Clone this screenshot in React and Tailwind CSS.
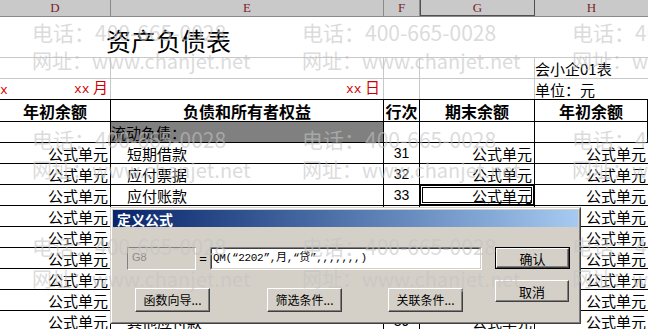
const rows = [
  ['短期借款', '31'],
  ['应付票据', '32'],
  ['应付账款', '33', true],
  ['预收账款', '34'],
  ['应付职工薪酬', '35'],
  ['应交税费', '36'],
  ['应付利息', '37'],
  ['应付利润', '38'],
  ['其他应付款', '39'],
];

const markCols = [32, 302, 572];
const phoneTops = [22, 129, 236];
const webTops = [51, 160, 269];

const Watermark = () => (
  <div className="pointer-events-none absolute inset-0 z-20 text-[rgba(195,195,195,0.6)] font-['Noto_Sans_CJK_SC',sans-serif]">
    {phoneTops.map((t) =>
      markCols.map((l) => (
        <div
          key={`p${t}-${l}`}
          className="absolute whitespace-nowrap text-[21px] leading-[21px]"
          style={{ top: t, left: l }}
        >
          电话：400-665-0028
        </div>
      ))
    )}
    {webTops.map((t) =>
      markCols.map((l) => (
        <div
          key={`w${t}-${l}`}
          className="absolute whitespace-nowrap text-[20px] leading-[20px]"
          style={{ top: t, left: l }}
        >
          网址：www.chanjet.net
        </div>
      ))
    )}
  </div>
);

const WinButton = ({ children, width, isDefault, className = '' }) => (
  <div
    className={`${width} ${
      isDefault ? 'border border-black' : ''
    } ${className}`}
  >
    <div className="h-full border border-t-white border-l-white border-r-[#404040] border-b-[#404040] shadow-[inset_-1px_-1px_0_#808080] bg-[#d4d0c8] flex items-center justify-center text-[12px] leading-none">
      {children}
    </div>
  </div>
);

const Dialog = () => (
  <div className="absolute left-[110px] top-[207px] z-10 w-[471px] h-[117px] border border-t-[#d4d0c8] border-l-[#d4d0c8] border-r-[#404040] border-b-[#404040] bg-[#d4d0c8]">
    <div className="h-full border border-t-white border-l-white border-r-[#808080] border-b-[#808080] p-[1px]">
      <div className="h-[17px] bg-linear-to-r from-[#0a246a] to-[#a6caf0] flex items-center pl-[4px] text-white font-bold text-[14px] leading-none">
        定义公式
      </div>
      <div className="flex pl-[14px] pt-[20px]">
        <div className="w-[355px]">
          <div className="flex h-[23px]">
            <div className="w-[69px] border border-t-[#808080] border-l-[#808080] border-r-white border-b-white bg-[#d4d0c8] pl-[4px] pt-[2px] text-[11px] leading-[14px] text-[#8a8a8a] font-['Liberation_Sans',sans-serif]">
              G8
            </div>
            <div className="w-[14px] flex items-center justify-center text-[13px] font-['Liberation_Sans',sans-serif]">
              =
            </div>
            <div className="w-[272px] border border-t-[#808080] border-l-[#808080] border-r-white border-b-white">
              <div className="h-full border border-t-[#404040] border-l-[#404040] border-r-[#d4d0c8] border-b-[#d4d0c8] bg-white flex items-center pl-[1px] text-[11px] font-['Liberation_Mono','Noto_Sans_CJK_SC',monospace] tracking-[-0.3px]">
                QM(“2202”,月,“贷”,,,,,,,)
              </div>
            </div>
          </div>
          <div className="flex mt-[18px] h-[24px]">
            <WinButton width="w-[75px]" className="ml-[8px]">函数向导...</WinButton>
            <WinButton width="w-[75px]" className="ml-[57px]">筛选条件...</WinButton>
            <WinButton width="w-[75px]" className="ml-[46px]">关联条件...</WinButton>
          </div>
        </div>
        <div className="ml-[13px] flex flex-col gap-[11px]">
          <WinButton width="w-[75px] h-[22px]" isDefault>
            <span className="text-[13px]">确认</span>
          </WinButton>
          <WinButton width="w-[74px] h-[22px]">
            <span className="text-[13px]">取消</span>
          </WinButton>
        </div>
      </div>
    </div>
  </div>
);

const Cell = ({ w, children, className = '' }) => (
  <div className={`${w} shrink-0 border-r border-black flex items-end leading-[19px] ${className}`}>
    {children}
  </div>
);

const formula = <span className="text-[15px]">公式单元</span>;

export default function App() {
  return (
    <div className="relative w-[648px] h-[329px] overflow-hidden bg-white text-black font-['Noto_Sans_CJK_SC',sans-serif]">
      {/* column letters */}
      <div className="flex h-[17px] bg-[#c9c9c9] border-b border-[#8a8a8a] text-[#7a1f2b] font-['Liberation_Serif',serif] text-[13px] leading-[16px]">
        <div className="w-[111px] border-r border-[#8a8a8a] text-center">D</div>
        <div className="w-[273px] border-r border-[#8a8a8a] text-center">E</div>
        <div className="w-[36px] border-r border-[#8a8a8a] text-center">F</div>
        <div className="w-[115px] border-x border-[#505050] shadow-[inset_0_-1px_0_#505050] text-center">G</div>
        <div className="flex-1 text-center">H</div>
      </div>

      {/* title */}
      <div className="h-[41px] border-b border-[#c8c8c8] flex items-end pl-[106px] pb-[2px] text-[25px] leading-[30px]">
        资产负债表
      </div>

      <div className="flex h-[21px] border-b border-[#c8c8c8] text-[15px] leading-[19px]">
        <div className="w-[111px] border-r border-[#c8c8c8]" />
        <div className="w-[273px] border-r border-[#c8c8c8]" />
        <div className="w-[36px] border-r border-[#c8c8c8]" />
        <div className="w-[115px] border-r border-[#c8c8c8]" />
        <div className="flex-1 flex items-end">会小企01表</div>
      </div>

      <div className="flex h-[21px] border-b border-black text-[15px] leading-[19px]">
        <div className="w-[111px] border-r border-[#c8c8c8] flex items-end justify-between pr-[2px] text-[#d00000]">
          <span className="font-['Liberation_Mono',monospace] text-[13px] leading-[16px]">x</span>
          <span>
            <span className="font-['Liberation_Mono',monospace] text-[13px]">xx</span> 月
          </span>
        </div>
        <div className="w-[273px] border-r border-[#c8c8c8] flex items-end justify-end pr-[3px] text-[#d00000]">
          <span>
            <span className="font-['Liberation_Mono',monospace] text-[13px]">xx</span> 日
          </span>
        </div>
        <div className="w-[36px] border-r border-[#c8c8c8]" />
        <div className="w-[115px] border-r border-[#c8c8c8]" />
        <div className="flex-1 flex items-end">单位：元</div>
      </div>

      {/* table header */}
      <div className="flex h-[22px] border-b border-black font-bold text-[16px]">
        <Cell w="w-[111px]" className="justify-center">年初余额</Cell>
        <Cell w="w-[273px]" className="justify-center">负债和所有者权益</Cell>
        <Cell w="w-[36px]" className="justify-center">行次</Cell>
        <Cell w="w-[115px]" className="justify-center">期末余额</Cell>
        <Cell w="flex-1" className="justify-center">年初余额</Cell>
      </div>

      <div className="flex h-[21px] border-b border-black text-[15px]">
        <Cell w="w-[111px]" />
        <Cell w="w-[273px]" className="bg-[#808080]">流动负债：</Cell>
        <Cell w="w-[36px]" />
        <Cell w="w-[115px]" />
        <Cell w="flex-1" />
      </div>

      {rows.map(([name, no, sel]) => (
        <div key={no} className="flex h-[21px] border-b border-black text-[15px]">
          <Cell w="w-[111px]" className="justify-end pr-[2px]">{formula}</Cell>
          <Cell w="w-[273px]" className="pl-[16px]">{name}</Cell>
          <Cell w="w-[36px]" className="justify-center font-['Liberation_Sans',sans-serif] text-[14px]">{no}</Cell>
          <Cell
            w="w-[115px]"
            className={`justify-end pr-[2px] ${
              sel ? 'shadow-[inset_0_0_0_1px_#000,inset_0_0_0_2px_#fff,inset_0_0_0_3px_#000]' : ''
            }`}
          >
            {formula}
          </Cell>
          <Cell w="flex-1" className="justify-end pr-[2px] border-r-0">{formula}</Cell>
        </div>
      ))}

      <Dialog />
      <Watermark />
    </div>
  );
}
